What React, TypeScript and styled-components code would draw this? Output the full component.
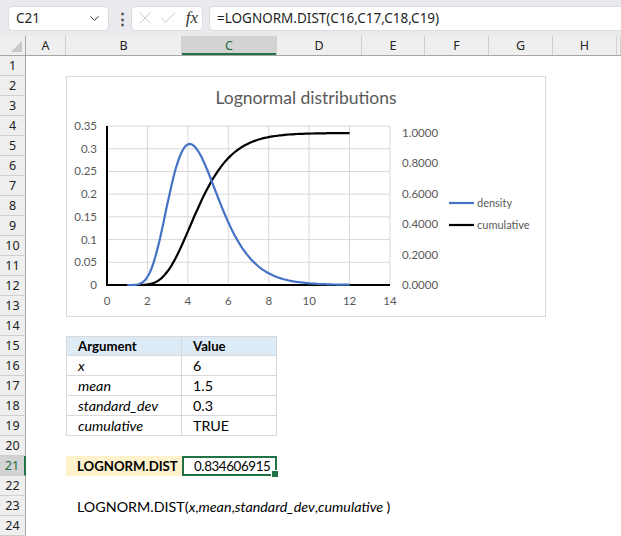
import React from "react";
import styled, { createGlobalStyle } from "styled-components";
import { ChevronDown, X, Check } from "lucide-react";

const GlobalStyle = createGlobalStyle`
  html, body {
    margin: 0;
    padding: 0;
    background: #fff;
    overflow: hidden;
  }
`;

const COLS = "26px 40px 116px 95px 85px 63px 64px 64px 64px 1fr";

const Page = styled.div`
  width: 621px;
  height: 536px;
  display: flex;
  flex-direction: column;
  font-family: "Lato", "Liberation Sans", sans-serif;
`;

const TopBar = styled.div`
  height: 36px;
  background: #e8eaed;
  display: flex;
  align-items: center;
  padding: 0 0 0 8px;
  gap: 6px;
`;

const NameBox = styled.div`
  width: 101px;
  height: 25px;
  box-sizing: border-box;
  background: #fff;
  border: 1px solid #dadce0;
  border-radius: 5px;
  display: flex;
  align-items: center;
  justify-content: space-between;
  padding: 0 6px 0 7px;
  font-family: "Noto Sans", sans-serif;
  font-size: 13.5px;
  color: #1f1f1f;
`;

const Dots = styled.div`
  width: 10px;
  text-align: center;
  font-size: 15px;
  color: #444;
  font-weight: bold;
`;

const FxBox = styled.div`
  width: 72px;
  height: 25px;
  box-sizing: border-box;
  background: #fff;
  border: 1px solid #dadce0;
  border-radius: 5px;
  display: flex;
  align-items: center;
  gap: 3px;
  padding: 0 4px 0 3px;
  color: #c4c4c4;
`;

const Fx = styled.span`
  margin-left: auto;
  font-family: "Liberation Serif", serif;
  font-style: italic;
  font-size: 17px;
  color: #333;
`;

const FormulaInput = styled.div`
  flex: 1;
  height: 25px;
  box-sizing: border-box;
  background: #fff;
  border: 1px solid #dadce0;
  border-right: none;
  border-radius: 5px 0 0 5px;
  display: flex;
  align-items: center;
  padding-left: 7px;
  font-family: "Noto Sans", sans-serif;
  font-size: 13.5px;
  color: #1f1f1f;
`;

const HeaderRow = styled.div`
  display: grid;
  grid-template-columns: ${COLS};
  height: 19px;
  background: #efefef;
  border-bottom: 1px solid #a6a6a6;
`;

const ColHead = styled.div<{ $active?: boolean }>`
  display: flex;
  align-items: center;
  justify-content: center;
  font-family: "Noto Sans", sans-serif;
  font-size: 12.5px;
  color: ${(p) => (p.$active ? "#1e6b41" : "#222")};
  background: ${(p) => (p.$active ? "#d3d3d3" : "transparent")};
  border-right: 1px solid #d0d0d0;
  box-sizing: border-box;
  box-shadow: ${(p) => (p.$active ? "inset 0 -2px 0 #217346" : "none")};
`;

const Corner = styled.div`
  border-right: 1px solid #a6a6a6;
  position: relative;
  &::after {
    content: "";
    position: absolute;
    right: 3px;
    bottom: 3px;
    border-left: 11px solid transparent;
    border-bottom: 11px solid #c8c8c8;
  }
`;

const Sheet = styled.div`
  position: relative;
  flex: 1;
`;

const Row = styled.div`
  display: grid;
  grid-template-columns: ${COLS};
  height: 20px;
`;

const RowHead = styled.div<{ $active?: boolean }>`
  display: flex;
  align-items: center;
  justify-content: center;
  font-family: "Noto Sans", sans-serif;
  font-size: 12.5px;
  color: ${(p) => (p.$active ? "#1e6b41" : "#222")};
  background: ${(p) => (p.$active ? "#d3d3d3" : "#efefef")};
  border-bottom: 1px solid #d0d0d0;
  border-right: ${(p) => (p.$active ? "2px solid #217346" : "1px solid #a6a6a6")};
  box-sizing: border-box;
`;

type CellKind = "plain" | "head" | "body" | "label" | "selected";

const Cell = styled.div<{
  $kind: CellKind;
  $italic?: boolean;
  $bold?: boolean;
  $top?: boolean;
  $left?: boolean;
}>`
  position: relative;
  display: flex;
  align-items: center;
  box-sizing: border-box;
  white-space: nowrap;
  padding-left: 11px;
  font-size: 14.3px;
  color: #000;
  font-style: ${(p) => (p.$italic ? "italic" : "normal")};
  ${(p) => (p.$bold || p.$kind === "head" ? "font-weight: bold; font-size: 13.2px;" : "")}
  background: ${(p) =>
    p.$kind === "head" ? "#ddebf7" : p.$kind === "label" ? "#fff2cc" : "transparent"};
  ${(p) =>
    p.$kind === "head" || p.$kind === "body"
      ? "border-right: 1px solid #d9d9d9; border-bottom: 1px solid #d9d9d9;"
      : ""}
  ${(p) => (p.$top ? "border-top: 1px solid #d9d9d9;" : "")}
  ${(p) => (p.$left ? "border-left: 1px solid #d9d9d9;" : "")}
  ${(p) =>
    p.$kind === "selected"
      ? "border: 2px solid #217346; padding-left: 10px; font-size: 13.4px; letter-spacing: -0.4px;"
      : ""}
`;

const Handle = styled.span`
  position: absolute;
  right: -4px;
  bottom: -4px;
  width: 6px;
  height: 6px;
  background: #217346;
  border: 1px solid #fff;
`;

const ChartBox = styled.div`
  position: absolute;
  left: 66px;
  top: 20px;
  width: 480px;
  height: 241px;
  box-sizing: border-box;
  background: #fff;
  border: 1px solid #d9d9d9;
`;

const ChartSvg = styled.svg`
  display: block;
  font-family: "Lato", "Liberation Sans", sans-serif;
`;

// chart geometry (inside chart box)
const PL = 40;
const PR = 323;
const PT = 49;
const PB = 208;
const xs = (v: number) => PL + ((PR - PL) * v) / 14;
const yl = (v: number) => PB - ((PB - PT) * v) / 0.35;
const yr = (v: number) => PB - 152 * v;

const MU = 1.5;
const SD = 0.3;

function erf(x: number) {
  const s = x < 0 ? -1 : 1;
  const a = Math.abs(x);
  const t = 1 / (1 + 0.3275911 * a);
  const y =
    1 -
    ((((1.061405429 * t - 1.453152027) * t + 1.421413741) * t - 0.284496736) * t +
      0.254829592) *
      t *
      Math.exp(-a * a);
  return s * y;
}

const density = (x: number) =>
  Math.exp(-((Math.log(x) - MU) ** 2) / (2 * SD * SD)) / (x * SD * Math.sqrt(2 * Math.PI));
const cumulative = (x: number) => 0.5 * (1 + erf((Math.log(x) - MU) / (SD * Math.SQRT2)));

function curve(fn: (x: number) => number, ys: (v: number) => number) {
  const pts: string[] = [];
  for (let x = 1; x <= 12.0001; x += 0.1) {
    pts.push(`${xs(x).toFixed(1)},${ys(fn(x)).toFixed(1)}`);
  }
  return "M" + pts.join("L");
}

function Chart() {
  const dens = React.useMemo(() => curve(density, yl), []);
  const cum = React.useMemo(() => curve(cumulative, yr), []);
  const leftTicks = [0, 0.05, 0.1, 0.15, 0.2, 0.25, 0.3, 0.35];
  const rightTicks = [0, 0.2, 0.4, 0.6, 0.8, 1.0];
  const xTicks = [0, 2, 4, 6, 8, 10, 12, 14];
  return (
    <ChartBox>
      <ChartSvg width={478} height={239}>
        <text x={239} y={27} textAnchor="middle" fontSize={17.5} fill="#595959">
          Lognormal distributions
        </text>
        {leftTicks.map((t) => (
          <g key={t}>
            <line x1={PL} x2={PR} y1={yl(t)} y2={yl(t)} stroke="#d9d9d9" strokeWidth={1} />
            <text x={30} y={yl(t) + 4} textAnchor="end" fontSize={11.5} fill="#595959">
              {t === 0 ? "0" : String(t)}
            </text>
          </g>
        ))}
        {xTicks.map((t) => (
          <g key={t}>
            <line x1={xs(t)} x2={xs(t)} y1={PT} y2={PB} stroke="#d9d9d9" strokeWidth={1} />
            <text x={xs(t)} y={228} textAnchor="middle" fontSize={11.5} fill="#595959">
              {t}
            </text>
          </g>
        ))}
        {rightTicks.map((t) => (
          <text key={t} x={335} y={yr(t) + 4} fontSize={11.5} fill="#595959">
            {t.toFixed(4)}
          </text>
        ))}
        <line x1={PL} x2={PL} y1={PT} y2={PB + 1} stroke="#000" strokeWidth={2} />
        <line x1={PL} x2={PR} y1={PB} y2={PB} stroke="#000" strokeWidth={2} />
        <path d={cum} fill="none" stroke="#000" strokeWidth={2.2} />
        <path d={dens} fill="none" stroke="#4472c4" strokeWidth={2.2} />
        <line x1={382} x2={407} y1={126} y2={126} stroke="#4472c4" strokeWidth={2.2} />
        <text x={410} y={130} fontSize={11} fill="#595959">
          density
        </text>
        <line x1={382} x2={407} y1={148} y2={148} stroke="#000" strokeWidth={2.2} />
        <text x={410} y={152} fontSize={11} fill="#595959">
          cumulative
        </text>
      </ChartSvg>
    </ChartBox>
  );
}

type CellDef = { text?: React.ReactNode; kind?: CellKind; italic?: boolean; bold?: boolean };

const tableRows: Record<number, [CellDef, CellDef]> = {
  15: [
    { text: "Argument", kind: "head" },
    { text: "Value", kind: "head" },
  ],
  16: [
    { text: "x", kind: "body", italic: true },
    { text: "6", kind: "body" },
  ],
  17: [
    { text: "mean", kind: "body", italic: true },
    { text: "1.5", kind: "body" },
  ],
  18: [
    { text: "standard_dev", kind: "body", italic: true },
    { text: "0.3", kind: "body" },
  ],
  19: [
    { text: "cumulative", kind: "body", italic: true },
    { text: "TRUE", kind: "body" },
  ],
  21: [
    { text: "LOGNORM.DIST", kind: "label", bold: true },
    { text: "0.834606915", kind: "selected" },
  ],
  23: [
    {
      text: (
        <span>
          LOGNORM.DIST(<i>x</i>,<i>mean</i>,<i>standard_dev</i>,<i>cumulative </i>)
        </span>
      ),
      kind: "plain",
    },
    {},
  ],
};

export default function App() {
  const rows = Array.from({ length: 24 }, (_, i) => i + 1);
  const letters = ["A", "B", "C", "D", "E", "F", "G", "H", ""];
  return (
    <Page>
      <GlobalStyle />
      <TopBar>
        <NameBox>
          <span>C21</span>
          <ChevronDown size={15} strokeWidth={1.6} color="#333" />
        </NameBox>
        <Dots>⋮</Dots>
        <FxBox>
          <X size={20} strokeWidth={1.1} />
          <Check size={20} strokeWidth={1.1} />
          <Fx>fx</Fx>
        </FxBox>
        <FormulaInput>=LOGNORM.DIST(C16,C17,C18,C19)</FormulaInput>
      </TopBar>
      <HeaderRow>
        <Corner />
        {letters.map((l, i) => (
          <ColHead key={i} $active={l === "C"}>
            {l}
          </ColHead>
        ))}
      </HeaderRow>
      <Sheet>
        {rows.map((r) => {
          const def = tableRows[r] ?? [{}, {}];
          const inTable = r >= 15 && r <= 19;
          const [b, c] = def;
          return (
            <Row key={r}>
              <RowHead $active={r === 21}>{r}</RowHead>
              <Cell $kind="plain" />
              <Cell
                $kind={b.kind ?? "plain"}
                $italic={b.italic}
                $bold={b.bold}
                $top={r === 15}
                $left={inTable}
              >
                {b.text}
              </Cell>
              <Cell $kind={c.kind ?? "plain"} $italic={c.italic} $bold={c.bold} $top={r === 15}>
                {c.text}
                {c.kind === "selected" && <Handle />}
              </Cell>
            </Row>
          );
        })}
        <Chart />
      </Sheet>
    </Page>
  );
}
